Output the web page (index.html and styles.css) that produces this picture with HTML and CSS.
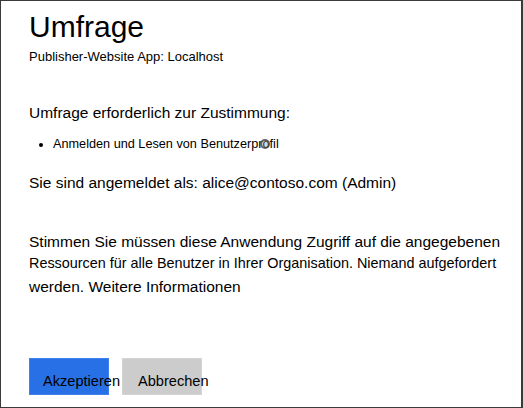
FILE: index.html
```html
<!DOCTYPE html>
<html lang="de">
<head>
<meta charset="utf-8">
<title>Umfrage</title>
<link rel="stylesheet" href="styles.css">
</head>
<body>
<div class="dialog">
  <h1 class="title">Umfrage</h1>
  <div class="subtitle">Publisher-Website App: Localhost</div>
  <h2 class="section">Umfrage erforderlich zur Zustimmung:</h2>
  <ul class="scopes">
    <li class="scope">Anmelden und Lesen von Benutzerprofil<span class="busy" aria-hidden="true"></span></li>
  </ul>
  <p class="signed">Sie sind angemeldet als: alice@contoso.com (Admin)</p>
  <p class="notice">
    <span class="line">Stimmen Sie müssen diese Anwendung Zugriff auf die angegebenen</span>
    <span class="line small">Ressourcen für alle Benutzer in Ihrer Organisation. Niemand aufgefordert</span>
    <span class="line last">werden. Weitere Informationen</span>
  </p>
  <div class="actions">
    <button class="btn btn-primary">Akzeptieren</button>
    <button class="btn btn-secondary">Abbrechen</button>
  </div>
</div>
</body>
</html>
```

FILE: styles.css
```css
* { box-sizing: border-box; }
html, body { margin: 0; padding: 0; background: #fff; }
body {
  font-family: "Liberation Sans", Arial, sans-serif;
  color: #000;
}
.dialog {
  width: 523px;
  height: 408px;
  border: 1px solid #3a3a3a;
  border-right-width: 2px;
  padding: 8px 0 0 28px;
  display: flex;
  flex-direction: column;
}
.title {
  margin: 0;
  font-size: 30px;
  line-height: 36px;
  font-weight: normal;
}
.subtitle {
  margin-top: 4px;
  font-size: 13px;
  line-height: 16px;
}
.section {
  margin: 38px 0 0;
  font-size: 15.5px;
  line-height: 20px;
  font-weight: normal;
}
.scopes {
  margin: 13px 0 0;
  padding-left: 24px;
  font-size: 12.7px;
  line-height: 16px;
}
.scope { position: relative; }
.busy {
  position: absolute;
  left: 207px;
  top: 3px;
  width: 10px;
  height: 10px;
  border-radius: 50%;
  border: 2.5px solid rgba(70, 70, 70, 0.8);
  background: rgba(150, 150, 150, 0.35);
}
.signed {
  margin: 21px 0 0;
  font-size: 15.5px;
  line-height: 20px;
}
.notice {
  margin: 38px 0 0;
  font-size: 15.5px;
  line-height: 22px;
}
.line { display: block; }
.line.small { font-size: 14.4px; line-height: 20px; }
.line.last { margin-top: 3px; }
.actions {
  margin-top: 60px;
  display: flex;
  gap: 13px;
}
.btn {
  width: 80px;
  height: 37px;
  border: 1px solid transparent;
  border-radius: 0;
  padding: 13px 0 4px 13px;
  font-family: "Liberation Sans", Arial, sans-serif;
  font-size: 14.6px;
  line-height: 18px;
  color: #000;
  text-align: left;
  white-space: nowrap;
  overflow: visible;
}
.btn-primary {
  background: #2870e6;
  border-color: #3f80ea;
}
.btn-secondary {
  background: #cccccc;
  border-color: #d4d4d4;
  padding-left: 15px;
}
```
